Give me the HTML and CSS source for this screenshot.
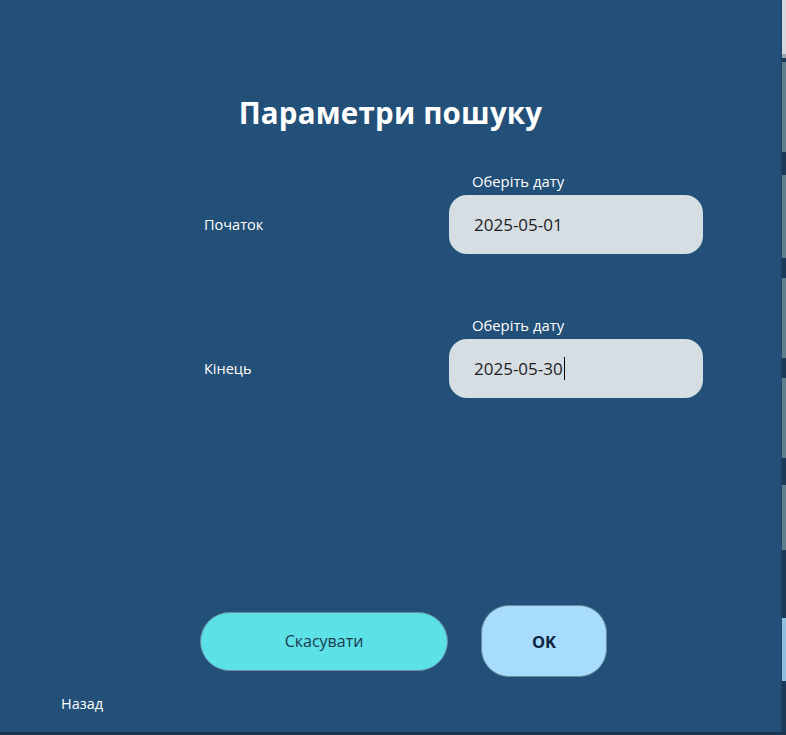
FILE: index.html
```html
<!DOCTYPE html>
<html lang="uk">
<head>
<meta charset="utf-8">
<title>Параметри пошуку</title>
<link rel="stylesheet" href="styles.css">
</head>
<body>
<div class="screen">
  <main class="dialog">
    <h1 class="title">Параметри пошуку</h1>
    <div class="form">
      <div class="row">
        <span class="row-label">Початок</span>
        <div class="field">
          <span class="caption">Оберіть дату</span>
          <div class="date-input">2025-05-01</div>
        </div>
      </div>
      <div class="row">
        <span class="row-label">Кінець</span>
        <div class="field">
          <span class="caption">Оберіть дату</span>
          <div class="date-input"><span class="caret">2025-05-30</span></div>
        </div>
      </div>
    </div>
    <div class="actions">
      <button class="btn btn-cancel">Скасувати</button>
      <button class="btn btn-ok">OK</button>
    </div>
    <div class="back">Назад</div>
  </main>
  <aside class="strip">
    <div class="seg s-light"></div>
    <div class="seg s-line"></div>
    <div class="seg s-dark" style="height:4px"></div>
    <div class="seg s-teal" style="height:90px"></div>
    <div class="seg s-dark" style="height:23px"></div>
    <div class="seg s-teal" style="height:83px"></div>
    <div class="seg s-dark" style="height:20px"></div>
    <div class="seg s-teal" style="height:80px"></div>
    <div class="seg s-dark" style="height:20px"></div>
    <div class="seg s-teal" style="height:80px"></div>
    <div class="seg s-dark" style="height:27px"></div>
    <div class="seg s-teal" style="height:65px"></div>
    <div class="seg s-dark" style="height:68px"></div>
    <div class="seg s-blue" style="height:63px"></div>
    <div class="seg s-dark s-fill"></div>
  </aside>
</div>
</body>
</html>
```

FILE: styles.css
```css
* { box-sizing: border-box; }
html, body { margin: 0; padding: 0; }
body {
  width: 786px;
  height: 735px;
  overflow: hidden;
  background: #1b3550;
  font-family: "Open Sans", "Noto Sans", sans-serif;
}
.screen {
  display: flex;
  height: 732px;
}
.dialog {
  flex: 1;
  background: #235078;
  display: flex;
  flex-direction: column;
  border-right: 1px solid #1d4468;
}
.title {
  margin: 93px 0 0;
  height: 40px;
  line-height: 40px;
  text-align: center;
  color: #ffffff;
  font-size: 29.5px;
  font-weight: 700;
  letter-spacing: 0.2px;
}
.form {
  margin-top: 38px;
  padding-left: 204px;
  display: flex;
  flex-direction: column;
  gap: 61px;
}
.row {
  display: grid;
  grid-template-columns: 245px 254px;
  align-items: end;
}
.row-label {
  color: #ffffff;
  font-size: 14.5px;
  line-height: 20px;
  align-self: end;
  margin-bottom: 19px;
}
.field {
  display: flex;
  flex-direction: column;
  gap: 4px;
}
.caption {
  color: #ffffff;
  font-size: 14.8px;
  line-height: 20px;
  padding-left: 23px;
}
.date-input {
  height: 59px;
  border-radius: 18px;
  background: #d6dde3;
  color: #1e1e1e;
  font-size: 17px;
  line-height: 59px;
  padding-left: 25px;
}
.caret {
  border-right: 1px solid #000;
  padding-right: 1px;
}
.actions {
  margin-top: 207px;
  padding-left: 200px;
  display: flex;
  align-items: center;
  gap: 33px;
}
.btn {
  font-family: inherit;
  cursor: pointer;
  padding: 0;
}
.btn-cancel {
  width: 248px;
  height: 59px;
  border-radius: 30px;
  background: #5ce1e6;
  border: 1px solid #6b8aa0;
  color: #1b3a50;
  font-size: 16px;
}
.btn-ok {
  width: 126px;
  height: 72px;
  border-radius: 28px;
  background: #a8dcff;
  border: 1px solid #6b8aa0;
  color: #0e2440;
  font-size: 16.5px;
  font-weight: 700;
}
.back {
  margin-top: 17px;
  padding-left: 61px;
  color: #ffffff;
  font-size: 14.5px;
  line-height: 20px;
}
.strip {
  width: 4px;
  display: flex;
  flex-direction: column;
}
.seg { width: 100%; }
.s-light { height: 54px; background: #d4d8dc; }
.s-line { height: 4px; background: #9aa4ae; }
.s-dark { background: #1c3a5a; }
.s-teal { background: #5e7f8c; }
.s-blue { background: #8fc0e0; }
.s-fill { flex: 1; }
```
